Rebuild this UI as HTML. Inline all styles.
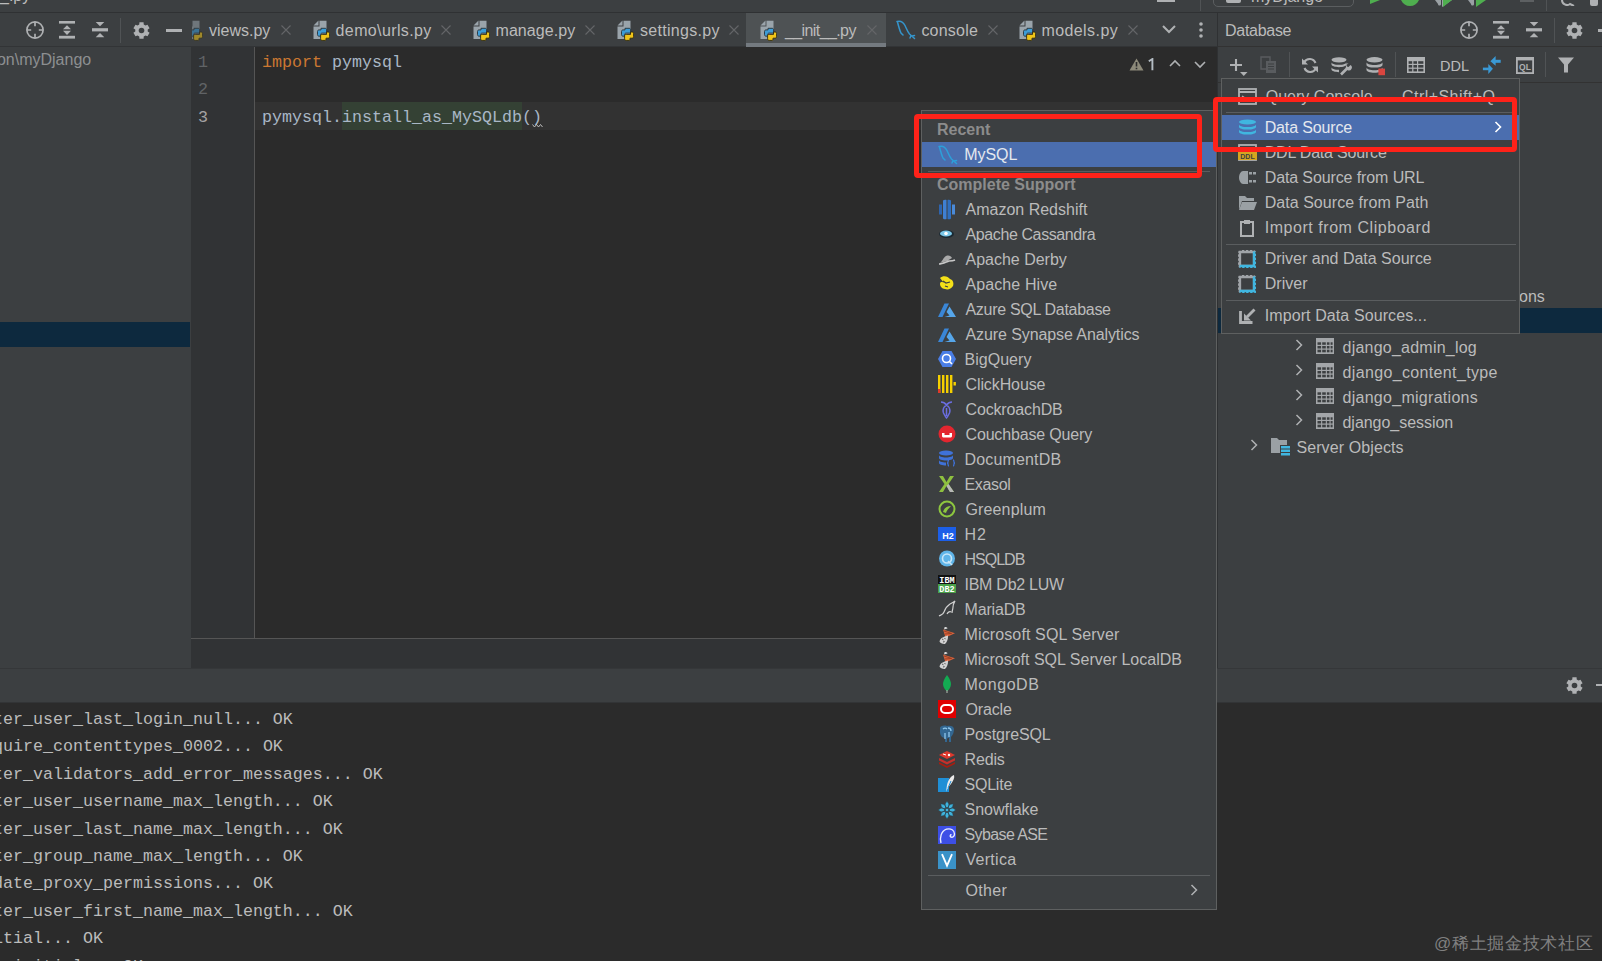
<!DOCTYPE html>
<html><head><meta charset="utf-8">
<style>
*{margin:0;padding:0;box-sizing:border-box}
html,body{width:1602px;height:961px;overflow:hidden;background:#2b2b2b;font-family:"Liberation Sans",sans-serif;font-size:16px;color:#bbbbbb;position:relative}
.a{position:absolute;display:block}
.t{position:absolute;white-space:nowrap;line-height:20px;height:20px}
.mono{font-family:"Liberation Mono",monospace;font-size:16.67px}
</style></head><body>
<div class="a" style="left:0px;top:0px;width:1602px;height:12px;background:#3c3f41;"></div>
<div class="a" style="left:0px;top:12px;width:1602px;height:1px;background:#2f3133;"></div>
<div class="a" style="left:0px;top:13px;width:1602px;height:34px;background:#3c3f41;"></div>
<div class="a" style="left:0px;top:47px;width:191px;height:621px;background:#3c3f41;"></div>
<div class="a" style="left:0px;top:322px;width:190px;height:25px;background:#0d293e;"></div>
<div class="a" style="left:191px;top:47px;width:63px;height:591px;background:#313335;"></div>
<div class="a" style="left:254px;top:47px;width:1px;height:591px;background:#555555;"></div>
<div class="a" style="left:255px;top:47px;width:962px;height:591px;background:#2b2b2b;"></div>
<div class="a" style="left:255px;top:102px;width:962px;height:28px;background:#323232;"></div>
<div class="a" style="left:342px;top:102px;width:180px;height:28px;background:#344134;"></div>
<div class="a" style="left:191px;top:638px;width:1026px;height:1px;background:#555555;"></div>
<div class="a" style="left:191px;top:639px;width:1026px;height:29px;background:#313335;"></div>
<div class="a" style="left:0px;top:668px;width:1602px;height:35px;background:#3c3f41;"></div>
<div class="a" style="left:0px;top:668px;width:1602px;height:1px;background:#353739;"></div>
<div class="a" style="left:0px;top:702px;width:1602px;height:1px;background:#323436;"></div>
<div class="a" style="left:0px;top:703px;width:1602px;height:258px;background:#2b2b2b;"></div>
<div class="a" style="left:1217px;top:13px;width:1px;height:655px;background:#2f3133;"></div>
<div class="a" style="left:1218px;top:13px;width:384px;height:655px;background:#3c3f41;"></div>
<div class="a" style="left:1218px;top:46px;width:384px;height:1px;background:#323232;"></div>
<div class="a" style="left:1218px;top:82px;width:384px;height:1px;background:#323232;"></div>
<div class="a" style="left:1218px;top:308px;width:384px;height:25px;background:#0d293e;"></div>
<div class="t" style="left:0px;top:-14px;color:#bbbbbb;font-size:16px;font-weight:normal;">_.py</div>
<div class="a" style="left:1213px;top:-8px;width:141px;height:15px;background:transparent;border:1px solid #5b5e60;border-radius:5px"></div>
<div class="a" style="left:1157px;top:0px;width:18px;height:2px;background:#afb1b3;"></div>
<div class="a" style="left:1200px;top:0px;width:1px;height:11px;background:#505355;"></div>
<div class="a" style="left:1226px;top:0px;width:15px;height:3px;background:#afb1b3;border-radius:0 0 2px 2px"></div>
<div class="t" style="left:1251px;top:-13px;color:#bbbbbb;font-size:16px;font-weight:normal;">myDjango</div>
<svg class="a" style="left:1370px;top:0px;" width="10" height="4" viewBox="0 0 10 4"><path d="M0 0h10L0 4z" fill="#4fae4f"/></svg>
<svg class="a" style="left:1401px;top:0px;" width="18" height="6" viewBox="0 0 18 6"><path d="M0 0h18c-2 4-5 6-9 6S2 4 0 0z" fill="#4fae4f"/></svg>
<svg class="a" style="left:1435px;top:0px;" width="17" height="7" viewBox="0 0 17 7"><path d="M0 0h6v4c0 2-3 2-3 0zM7 0h10L7 7z" fill="#9aa0a4"/><path d="M8 0h9L8 7z" fill="#4fae4f"/></svg>
<svg class="a" style="left:1468px;top:0px;" width="18" height="7" viewBox="0 0 18 7"><path d="M0 0h6v4c0 2-3 2-3 0z" fill="#9aa0a4"/><path d="M8 0h10L8 7z" fill="#4fae4f"/></svg>
<div class="a" style="left:1520px;top:0px;width:14px;height:2px;background:#5d6062;"></div>
<div class="a" style="left:1546px;top:0px;width:1px;height:11px;background:#505355;"></div>
<svg class="a" style="left:1560px;top:0px;" width="16" height="6" viewBox="0 0 16 6"><path d="M2 0a5 5 0 0 0 8 4l4 2" stroke="#afb1b3" stroke-width="2" fill="none"/></svg>
<div class="a" style="left:1590px;top:0px;width:8px;height:6px;background:#afb1b3;border-radius:0 0 2px 2px"></div>
<svg class="a" style="left:26px;top:21px;" width="18" height="18" viewBox="0 0 18 18"><circle cx="9" cy="9" r="8.1" fill="none" stroke="#afb1b3" stroke-width="1.7"/><path d="M9 1v4.2M9 12.8V17M1 9h4.2M12.8 9H17" stroke="#afb1b3" stroke-width="1.7"/></svg>
<svg class="a" style="left:59px;top:21px;" width="16" height="18" viewBox="0 0 16 18"><rect x="0" y="0" width="16" height="2.6" fill="#afb1b3"/><rect x="0" y="14.8" width="16" height="2.8" fill="#afb1b3"/><path d="M4 8.3L8 4.2L12 8.3zM4 9.8L8 13.9L12 9.8z" fill="#afb1b3"/></svg>
<svg class="a" style="left:92px;top:22px;" width="16" height="16" viewBox="0 0 16 16"><rect x="0" y="6.2" width="16" height="3.2" fill="#afb1b3"/><path d="M3.7 0H12.3L8 4.3zM3.7 15.3H12.3L8 11z" fill="#afb1b3"/></svg>
<div class="a" style="left:120px;top:18px;width:1px;height:25px;background:#505355;"></div>
<div class="a" style="left:0px;top:46px;width:1217px;height:1px;background:#323436;"></div>
<svg class="a" style="left:132.5px;top:21.5px;" width="17" height="17" viewBox="0 0 17 17"><path d="M6.27 2.61 L6.42 0.36 L10.58 0.36 L10.73 2.61 L12.48 3.62 L14.51 2.63 L16.59 6.23 L14.72 7.49 L14.72 9.51 L16.59 10.77 L14.51 14.37 L12.48 13.38 L10.73 14.39 L10.58 16.64 L6.42 16.64 L6.27 14.39 L4.52 13.38 L2.49 14.37 L0.41 10.77 L2.28 9.51 L2.28 7.49 L0.41 6.23 L2.49 2.63 L4.52 3.62Z" fill="#afb1b3"/><circle cx="8.5" cy="8.5" r="2.8" fill="#3c3f41"/></svg>
<div class="a" style="left:166px;top:29px;width:16px;height:2.5px;background:#afb1b3;"></div>
<div class="a" style="left:746px;top:13px;width:140px;height:34px;background:#4e5254;"></div>
<div class="a" style="left:746px;top:43px;width:140px;height:4px;background:#747a80;"></div>
<div class="a" style="left:192px;top:19px;width:11px;height:22px;overflow:hidden;opacity:.55"><svg class="a" style="left:-6px;top:1px" width="17" height="21" viewBox="0 0 17 21"><path d="M6.5 0.8H13.5V19H0.5V6.5H6.5Z" fill="#9aa4ab"/><path d="M0.5 5.5L5.5 0.5V5.5Z" fill="#9aa4ab"/><path d="M8 8.3h4c1 0 1.6.6 1.6 1.6v3.2H9.2c-1 0-1.6.6-1.6 1.6V16.2H6.1c-1 0-1.6-.6-1.6-1.6v-3.1c0-1 .6-1.6 1.6-1.6h1.9z" fill="#3d9cd6" stroke="#26323a" stroke-width=".9"/><path d="M15 12c1 0 1.6.6 1.6 1.6v3c0 1-.6 1.6-1.6 1.6h-2v1.2c0 .6-.5 1-1 1H9.2c-1 0-1.6-.6-1.6-1.6v-2.8c0-1 .6-1.6 1.6-1.6h4.3V12z" fill="#f0c419" stroke="#2e2a10" stroke-width=".9"/></svg></div>
<div class="t" style="left:209px;top:21px;color:#bbbbbb;font-size:16px;font-weight:normal;letter-spacing:0.000px;">views.py</div>
<svg class="a" style="left:281px;top:25px;" width="10" height="10" viewBox="0 0 10 10"><path d="M0.5 0.5l9 9M9.5 0.5l-9 9" stroke="#646668" stroke-width="1.1"/></svg>
<div class="t" style="left:335.6px;top:21px;color:#bbbbbb;font-size:16px;font-weight:normal;letter-spacing:0.373px;">demo\urls.py</div>
<svg class="a" style="left:441px;top:25px;" width="10" height="10" viewBox="0 0 10 10"><path d="M0.5 0.5l9 9M9.5 0.5l-9 9" stroke="#646668" stroke-width="1.1"/></svg>
<div class="t" style="left:495.5px;top:21px;color:#bbbbbb;font-size:16px;font-weight:normal;letter-spacing:0.062px;">manage.py</div>
<svg class="a" style="left:585px;top:25px;" width="10" height="10" viewBox="0 0 10 10"><path d="M0.5 0.5l9 9M9.5 0.5l-9 9" stroke="#646668" stroke-width="1.1"/></svg>
<div class="t" style="left:640px;top:21px;color:#bbbbbb;font-size:16px;font-weight:normal;letter-spacing:0.300px;">settings.py</div>
<svg class="a" style="left:729px;top:25px;" width="10" height="10" viewBox="0 0 10 10"><path d="M0.5 0.5l9 9M9.5 0.5l-9 9" stroke="#646668" stroke-width="1.1"/></svg>
<div class="t" style="left:785px;top:21px;color:#bbbbbb;font-size:16px;font-weight:normal;letter-spacing:-0.600px;">__init__.py</div>
<svg class="a" style="left:867px;top:25px;" width="10" height="10" viewBox="0 0 10 10"><path d="M0.5 0.5l9 9M9.5 0.5l-9 9" stroke="#646668" stroke-width="1.1"/></svg>
<div class="t" style="left:921.4px;top:21px;color:#bbbbbb;font-size:16px;font-weight:normal;letter-spacing:0.217px;">console</div>
<svg class="a" style="left:988px;top:25px;" width="10" height="10" viewBox="0 0 10 10"><path d="M0.5 0.5l9 9M9.5 0.5l-9 9" stroke="#646668" stroke-width="1.1"/></svg>
<div class="t" style="left:1041.4px;top:21px;color:#bbbbbb;font-size:16px;font-weight:normal;letter-spacing:0.425px;">models.py</div>
<svg class="a" style="left:1128px;top:25px;" width="10" height="10" viewBox="0 0 10 10"><path d="M0.5 0.5l9 9M9.5 0.5l-9 9" stroke="#646668" stroke-width="1.1"/></svg>
<svg class="a" style="left:313px;top:20px;" width="17" height="21" viewBox="0 0 17 21"><path d="M6.5 0.8H13.5V19H0.5V6.5H6.5Z" fill="#9aa4ab"/><path d="M0.5 5.5L5.5 0.5V5.5Z" fill="#9aa4ab"/><path d="M8 8.3h4c1 0 1.6.6 1.6 1.6v3.2H9.2c-1 0-1.6.6-1.6 1.6V16.2H6.1c-1 0-1.6-.6-1.6-1.6v-3.1c0-1 .6-1.6 1.6-1.6h1.9z" fill="#3d9cd6" stroke="#26323a" stroke-width=".9"/><path d="M15 12c1 0 1.6.6 1.6 1.6v3c0 1-.6 1.6-1.6 1.6h-2v1.2c0 .6-.5 1-1 1H9.2c-1 0-1.6-.6-1.6-1.6v-2.8c0-1 .6-1.6 1.6-1.6h4.3V12z" fill="#f0c419" stroke="#2e2a10" stroke-width=".9"/></svg>
<svg class="a" style="left:473px;top:20px;" width="17" height="21" viewBox="0 0 17 21"><path d="M6.5 0.8H13.5V19H0.5V6.5H6.5Z" fill="#9aa4ab"/><path d="M0.5 5.5L5.5 0.5V5.5Z" fill="#9aa4ab"/><path d="M8 8.3h4c1 0 1.6.6 1.6 1.6v3.2H9.2c-1 0-1.6.6-1.6 1.6V16.2H6.1c-1 0-1.6-.6-1.6-1.6v-3.1c0-1 .6-1.6 1.6-1.6h1.9z" fill="#3d9cd6" stroke="#26323a" stroke-width=".9"/><path d="M15 12c1 0 1.6.6 1.6 1.6v3c0 1-.6 1.6-1.6 1.6h-2v1.2c0 .6-.5 1-1 1H9.2c-1 0-1.6-.6-1.6-1.6v-2.8c0-1 .6-1.6 1.6-1.6h4.3V12z" fill="#f0c419" stroke="#2e2a10" stroke-width=".9"/></svg>
<svg class="a" style="left:617px;top:20px;" width="17" height="21" viewBox="0 0 17 21"><path d="M6.5 0.8H13.5V19H0.5V6.5H6.5Z" fill="#9aa4ab"/><path d="M0.5 5.5L5.5 0.5V5.5Z" fill="#9aa4ab"/><path d="M8 8.3h4c1 0 1.6.6 1.6 1.6v3.2H9.2c-1 0-1.6.6-1.6 1.6V16.2H6.1c-1 0-1.6-.6-1.6-1.6v-3.1c0-1 .6-1.6 1.6-1.6h1.9z" fill="#3d9cd6" stroke="#26323a" stroke-width=".9"/><path d="M15 12c1 0 1.6.6 1.6 1.6v3c0 1-.6 1.6-1.6 1.6h-2v1.2c0 .6-.5 1-1 1H9.2c-1 0-1.6-.6-1.6-1.6v-2.8c0-1 .6-1.6 1.6-1.6h4.3V12z" fill="#f0c419" stroke="#2e2a10" stroke-width=".9"/></svg>
<svg class="a" style="left:760px;top:20px;" width="17" height="21" viewBox="0 0 17 21"><path d="M6.5 0.8H13.5V19H0.5V6.5H6.5Z" fill="#9aa4ab"/><path d="M0.5 5.5L5.5 0.5V5.5Z" fill="#9aa4ab"/><path d="M8 8.3h4c1 0 1.6.6 1.6 1.6v3.2H9.2c-1 0-1.6.6-1.6 1.6V16.2H6.1c-1 0-1.6-.6-1.6-1.6v-3.1c0-1 .6-1.6 1.6-1.6h1.9z" fill="#3d9cd6" stroke="#26323a" stroke-width=".9"/><path d="M15 12c1 0 1.6.6 1.6 1.6v3c0 1-.6 1.6-1.6 1.6h-2v1.2c0 .6-.5 1-1 1H9.2c-1 0-1.6-.6-1.6-1.6v-2.8c0-1 .6-1.6 1.6-1.6h4.3V12z" fill="#f0c419" stroke="#2e2a10" stroke-width=".9"/></svg>
<svg class="a" style="left:1019px;top:20px;" width="17" height="21" viewBox="0 0 17 21"><path d="M6.5 0.8H13.5V19H0.5V6.5H6.5Z" fill="#9aa4ab"/><path d="M0.5 5.5L5.5 0.5V5.5Z" fill="#9aa4ab"/><path d="M8 8.3h4c1 0 1.6.6 1.6 1.6v3.2H9.2c-1 0-1.6.6-1.6 1.6V16.2H6.1c-1 0-1.6-.6-1.6-1.6v-3.1c0-1 .6-1.6 1.6-1.6h1.9z" fill="#3d9cd6" stroke="#26323a" stroke-width=".9"/><path d="M15 12c1 0 1.6.6 1.6 1.6v3c0 1-.6 1.6-1.6 1.6h-2v1.2c0 .6-.5 1-1 1H9.2c-1 0-1.6-.6-1.6-1.6v-2.8c0-1 .6-1.6 1.6-1.6h4.3V12z" fill="#f0c419" stroke="#2e2a10" stroke-width=".9"/></svg>
<svg class="a" style="left:896px;top:20px;" width="20" height="20" viewBox="0 0 20 20"><path d="M1 1.5C4.5 0.5 7.5 2.5 9 5.5S11.5 12 13.5 14L18.5 18.5M1.5 2C2.5 6 3.5 10 5 13L7 15M15 15.5l-1 2.5M16 16l2.5-.5" fill="none" stroke="#3595cc" stroke-width="1.5" stroke-linecap="round"/></svg>
<svg class="a" style="left:1162px;top:25px;" width="14" height="9" viewBox="0 0 14 9"><path d="M1 1l6 6 6-6" fill="none" stroke="#afb1b3" stroke-width="2"/></svg>
<svg class="a" style="left:1198px;top:22px;" width="6" height="16" viewBox="0 0 6 16"><circle cx="3" cy="2" r="1.8" fill="#afb1b3"/><circle cx="3" cy="8" r="1.8" fill="#afb1b3"/><circle cx="3" cy="14" r="1.8" fill="#afb1b3"/></svg>
<div class="t" style="left:-12px;top:50px;color:#8d8f91;font-size:16px;font-weight:normal;">hon\myDjango</div>
<div class="t mono" style="left:198px;top:53px;color:#606366;">1</div>
<div class="t mono" style="left:198px;top:80px;color:#606366;">2</div>
<div class="t mono" style="left:198px;top:108px;color:#a4a3a3;">3</div>
<div class="t mono" style="left:262px;top:53px;color:#a9b7c6;"><span style="color:#cc7832">import</span> pymysql</div>
<div class="t mono" style="left:262px;top:108px;color:#a9b7c6;">pymysql.install_as_MySQLdb()</div>
<svg class="a" style="left:532px;top:123px;" width="11" height="5" viewBox="0 0 11 5"><path d="M0.5 1.5l2 2.5 2-2.5 2 2.5 2-2.5 2 2.5" fill="none" stroke="#c8c8c8" stroke-width="0.9"/></svg>
<svg class="a" style="left:1129px;top:58px;" width="15" height="13" viewBox="0 0 15 13"><path d="M7.5 0.5L14.5 12.5H0.5z" fill="#8d8a7a"/><path d="M7.5 4v4.5M7.5 9.8v1.4" stroke="#2b2b2b" stroke-width="1.6"/></svg>
<svg class="a" style="left:1148px;top:58px;" width="7" height="13" viewBox="0 0 7 13"><path d="M0.8 3.2L4.4 1V12.2" fill="none" stroke="#b4bcc4" stroke-width="1.9"/></svg>
<svg class="a" style="left:1169px;top:59px;" width="12" height="8" viewBox="0 0 12 8"><path d="M1 7l5-5 5 5" fill="none" stroke="#afb1b3" stroke-width="1.6"/></svg>
<svg class="a" style="left:1194px;top:61px;" width="12" height="8" viewBox="0 0 12 8"><path d="M1 1l5 5 5-5" fill="none" stroke="#afb1b3" stroke-width="1.6"/></svg>
<div class="t mono" style="left:-7px;top:710px;color:#bbbbbb;">ter_user_last_login_null... OK</div>
<div class="t mono" style="left:-7px;top:737px;color:#bbbbbb;">quire_contenttypes_0002... OK</div>
<div class="t mono" style="left:-7px;top:765px;color:#bbbbbb;">ter_validators_add_error_messages... OK</div>
<div class="t mono" style="left:-7px;top:792px;color:#bbbbbb;">ter_user_username_max_length... OK</div>
<div class="t mono" style="left:-7px;top:820px;color:#bbbbbb;">ter_user_last_name_max_length... OK</div>
<div class="t mono" style="left:-7px;top:847px;color:#bbbbbb;">ter_group_name_max_length... OK</div>
<div class="t mono" style="left:-7px;top:874px;color:#bbbbbb;">date_proxy_permissions... OK</div>
<div class="t mono" style="left:-7px;top:902px;color:#bbbbbb;">ter_user_first_name_max_length... OK</div>
<div class="t mono" style="left:-7px;top:929px;color:#bbbbbb;">itial... OK</div>
<div class="t mono" style="left:-7px;top:957px;color:#bbbbbb;">1_initial... OK</div>
<svg class="a" style="left:1566px;top:677px;" width="17" height="17" viewBox="0 0 17 17"><path d="M6.27 2.61 L6.42 0.36 L10.58 0.36 L10.73 2.61 L12.48 3.62 L14.51 2.63 L16.59 6.23 L14.72 7.49 L14.72 9.51 L16.59 10.77 L14.51 14.37 L12.48 13.38 L10.73 14.39 L10.58 16.64 L6.42 16.64 L6.27 14.39 L4.52 13.38 L2.49 14.37 L0.41 10.77 L2.28 9.51 L2.28 7.49 L0.41 6.23 L2.49 2.63 L4.52 3.62Z" fill="#afb1b3"/><circle cx="8.5" cy="8.5" r="2.8" fill="#3c3f41"/></svg>
<div class="a" style="left:1596px;top:684px;width:6px;height:2px;background:#afb1b3;"></div>
<div class="t" style="left:1434px;top:934px;color:#808080;font-size:17px;font-weight:normal;letter-spacing:0.7px;">@稀土掘金技术社区</div>
<div class="t" style="left:1225px;top:21px;color:#bbbbbb;font-size:16px;font-weight:normal;letter-spacing:-0.286px;">Database</div>
<svg class="a" style="left:1460px;top:21px;" width="18" height="18" viewBox="0 0 18 18"><circle cx="9" cy="9" r="8.1" fill="none" stroke="#afb1b3" stroke-width="1.7"/><path d="M9 1v4.2M9 12.8V17M1 9h4.2M12.8 9H17" stroke="#afb1b3" stroke-width="1.7"/></svg>
<svg class="a" style="left:1493px;top:21px;" width="16" height="18" viewBox="0 0 16 18"><rect x="0" y="0" width="16" height="2.6" fill="#afb1b3"/><rect x="0" y="14.8" width="16" height="2.8" fill="#afb1b3"/><path d="M4 8.3L8 4.2L12 8.3zM4 9.8L8 13.9L12 9.8z" fill="#afb1b3"/></svg>
<svg class="a" style="left:1526px;top:22px;" width="16" height="16" viewBox="0 0 16 16"><rect x="0" y="6.2" width="16" height="3.2" fill="#afb1b3"/><path d="M3.7 0H12.3L8 4.3zM3.7 15.3H12.3L8 11z" fill="#afb1b3"/></svg>
<div class="a" style="left:1554px;top:18px;width:1px;height:25px;background:#505355;"></div>
<svg class="a" style="left:1566.3px;top:21.6px;" width="17" height="17" viewBox="0 0 17 17"><path d="M6.27 2.61 L6.42 0.36 L10.58 0.36 L10.73 2.61 L12.48 3.62 L14.51 2.63 L16.59 6.23 L14.72 7.49 L14.72 9.51 L16.59 10.77 L14.51 14.37 L12.48 13.38 L10.73 14.39 L10.58 16.64 L6.42 16.64 L6.27 14.39 L4.52 13.38 L2.49 14.37 L0.41 10.77 L2.28 9.51 L2.28 7.49 L0.41 6.23 L2.49 2.63 L4.52 3.62Z" fill="#afb1b3"/><circle cx="8.5" cy="8.5" r="2.8" fill="#3c3f41"/></svg>
<div class="a" style="left:1598px;top:29px;width:4px;height:2.5px;background:#afb1b3;"></div>
<svg class="a" style="left:1229px;top:58px;" width="19" height="19" viewBox="0 0 19 19"><path d="M7 1v12M1 7h12" stroke="#afb1b3" stroke-width="2.1"/><path d="M11 14h7.5l-3.75 4z" fill="#afb1b3"/></svg>
<svg class="a" style="left:1260px;top:56px;" width="17" height="18" viewBox="0 0 17 18"><path d="M1 1h9v12H1z" fill="none" stroke="#595c5f" stroke-width="1.4"/><path d="M6 5h10v12H6z" fill="#595c5f"/><path d="M8 8h6M8 10.5h6M8 13h6" stroke="#3c3f41" stroke-width="1.1"/></svg>
<div class="a" style="left:1289px;top:52px;width:1px;height:25px;background:#505355;"></div>
<svg class="a" style="left:1301px;top:57px;" width="18" height="17" viewBox="0 0 18 17"><path d="M14.5 6A6.3 6.3 0 0 0 3.2 5.2M3.5 11A6.3 6.3 0 0 0 14.8 11.8" fill="none" stroke="#afb1b3" stroke-width="2.1"/><path d="M1 1.5v6h6zM17 15.5v-6h-6z" fill="#afb1b3"/></svg>
<svg class="a" style="left:1331px;top:57px;" width="21" height="19" viewBox="0 0 21 19"><ellipse cx="8" cy="2.8" rx="7.5" ry="2.6" fill="#afb1b3"/><path d="M0.5 5.2c0 1.5 3.4 2.6 7.5 2.6s7.5-1.1 7.5-2.6v2.4c0 1.5-3.4 2.6-7.5 2.6S.5 9.1.5 7.6zM.5 10.2c0 1.5 3.4 2.6 7.5 2.6v2.4c-4.1 0-7.5-1.1-7.5-2.6z" fill="#afb1b3"/><path d="M10 17.5l6.5-6.5" stroke="#afb1b3" stroke-width="2.6"/><path d="M15 9.5a3 3 0 1 0 4.5-1.5l-2 2-1.6-.4-.4-1.6 2-2a3 3 0 0 0-2.5 3.5z" fill="#afb1b3"/></svg>
<svg class="a" style="left:1366px;top:57px;" width="20" height="19" viewBox="0 0 20 19"><ellipse cx="8.5" cy="2.8" rx="8" ry="2.7" fill="#afb1b3"/><path d="M.5 5.3c0 1.5 3.6 2.7 8 2.7s8-1.2 8-2.7v2.6c0 1.5-3.6 2.7-8 2.7s-8-1.2-8-2.7zM.5 10.5c0 1.5 3.6 2.7 8 2.7s8-1.2 8-2.7v2.6c0 1.5-3.6 2.7-8 2.7s-8-1.2-8-2.7z" fill="#afb1b3"/><rect x="12.4" y="11.6" width="6.6" height="6.6" fill="#d9453f"/></svg>
<div class="a" style="left:1395px;top:52px;width:1px;height:25px;background:#505355;"></div>
<svg class="a" style="left:1407px;top:57px;" width="18" height="16" viewBox="0 0 18 16"><rect x="0" y="0" width="18" height="16" fill="#afb1b3"/><g fill="#3c3f41"><rect x="1.6" y="4.2" width="3.6" height="2.6"/><rect x="6.4" y="4.2" width="3.6" height="2.6"/><rect x="11.2" y="4.2" width="5.2" height="2.6"/><rect x="1.6" y="8" width="3.6" height="2.6"/><rect x="6.4" y="8" width="3.6" height="2.6"/><rect x="11.2" y="8" width="5.2" height="2.6"/><rect x="1.6" y="11.8" width="3.6" height="2.6"/><rect x="6.4" y="11.8" width="3.6" height="2.6"/><rect x="11.2" y="11.8" width="5.2" height="2.6"/></g></svg>
<div class="t" style="left:1440px;top:56px;color:#bbbbbb;font-size:14.5px;font-weight:normal;">DDL</div>
<svg class="a" style="left:1482px;top:55px;" width="20" height="20" viewBox="0 0 20 20"><path d="M8.4 6.3L13.6 1.1V10.8z" fill="#3a9ad6"/><rect x="13" y="4.8" width="5.7" height="3" fill="#3a9ad6"/><path d="M10.9 13.7L6.3 8.9V18.9z" fill="#3a9ad6"/><rect x="0.9" y="12.6" width="6" height="2.6" fill="#3a9ad6"/></svg>
<svg class="a" style="left:1516px;top:57px;" width="18" height="17" viewBox="0 0 18 17"><rect x="0.9" y="0.9" width="16.2" height="15.2" fill="none" stroke="#afb1b3" stroke-width="1.8"/><rect x="0" y="0" width="18" height="3.4" fill="#afb1b3"/><text x="9" y="13.4" font-family="Liberation Sans" font-size="8.5" font-weight="bold" fill="#afb1b3" text-anchor="middle">QL</text></svg>
<div class="a" style="left:1545px;top:52px;width:1px;height:25px;background:#505355;"></div>
<svg class="a" style="left:1558px;top:57px;" width="16" height="16" viewBox="0 0 16 16"><path d="M0 0.5h16L10 7.5v8h-4v-8z" fill="#afb1b3"/></svg>
<div class="t" style="left:1519px;top:287px;color:#bbbbbb;font-size:16px;font-weight:normal;">ons</div>
<svg class="a" style="left:1295px;top:339px;" width="8" height="12" viewBox="0 0 8 12"><path d="M1.5 1l5 5-5 5" fill="none" stroke="#afb1b3" stroke-width="1.5"/></svg>
<svg class="a" style="left:1316px;top:338px;" width="18" height="16" viewBox="0 0 18 16"><rect x="0" y="0" width="18" height="16" fill="#a3a6a9"/><g fill="#3c3f41"><rect x="1.5" y="4.3" width="3.6" height="2.5"/><rect x="6.2" y="4.3" width="3.6" height="2.5"/><rect x="10.9" y="4.3" width="2.6" height="2.5"/><rect x="14.6" y="4.3" width="2" height="2.5"/><rect x="1.5" y="8" width="3.6" height="2.5"/><rect x="6.2" y="8" width="3.6" height="2.5"/><rect x="10.9" y="8" width="2.6" height="2.5"/><rect x="14.6" y="8" width="2" height="2.5"/><rect x="1.5" y="11.7" width="3.6" height="2.6"/><rect x="6.2" y="11.7" width="3.6" height="2.6"/><rect x="10.9" y="11.7" width="2.6" height="2.6"/><rect x="14.6" y="11.7" width="2" height="2.6"/></g></svg>
<div class="t" style="left:1342.5px;top:338px;color:#bbbbbb;font-size:16px;font-weight:normal;letter-spacing:0.233px;">django_admin_log</div>
<svg class="a" style="left:1295px;top:364px;" width="8" height="12" viewBox="0 0 8 12"><path d="M1.5 1l5 5-5 5" fill="none" stroke="#afb1b3" stroke-width="1.5"/></svg>
<svg class="a" style="left:1316px;top:363px;" width="18" height="16" viewBox="0 0 18 16"><rect x="0" y="0" width="18" height="16" fill="#a3a6a9"/><g fill="#3c3f41"><rect x="1.5" y="4.3" width="3.6" height="2.5"/><rect x="6.2" y="4.3" width="3.6" height="2.5"/><rect x="10.9" y="4.3" width="2.6" height="2.5"/><rect x="14.6" y="4.3" width="2" height="2.5"/><rect x="1.5" y="8" width="3.6" height="2.5"/><rect x="6.2" y="8" width="3.6" height="2.5"/><rect x="10.9" y="8" width="2.6" height="2.5"/><rect x="14.6" y="8" width="2" height="2.5"/><rect x="1.5" y="11.7" width="3.6" height="2.6"/><rect x="6.2" y="11.7" width="3.6" height="2.6"/><rect x="10.9" y="11.7" width="2.6" height="2.6"/><rect x="14.6" y="11.7" width="2" height="2.6"/></g></svg>
<div class="t" style="left:1342.5px;top:363px;color:#bbbbbb;font-size:16px;font-weight:normal;letter-spacing:0.356px;">django_content_type</div>
<svg class="a" style="left:1295px;top:389px;" width="8" height="12" viewBox="0 0 8 12"><path d="M1.5 1l5 5-5 5" fill="none" stroke="#afb1b3" stroke-width="1.5"/></svg>
<svg class="a" style="left:1316px;top:388px;" width="18" height="16" viewBox="0 0 18 16"><rect x="0" y="0" width="18" height="16" fill="#a3a6a9"/><g fill="#3c3f41"><rect x="1.5" y="4.3" width="3.6" height="2.5"/><rect x="6.2" y="4.3" width="3.6" height="2.5"/><rect x="10.9" y="4.3" width="2.6" height="2.5"/><rect x="14.6" y="4.3" width="2" height="2.5"/><rect x="1.5" y="8" width="3.6" height="2.5"/><rect x="6.2" y="8" width="3.6" height="2.5"/><rect x="10.9" y="8" width="2.6" height="2.5"/><rect x="14.6" y="8" width="2" height="2.5"/><rect x="1.5" y="11.7" width="3.6" height="2.6"/><rect x="6.2" y="11.7" width="3.6" height="2.6"/><rect x="10.9" y="11.7" width="2.6" height="2.6"/><rect x="14.6" y="11.7" width="2" height="2.6"/></g></svg>
<div class="t" style="left:1342.5px;top:388px;color:#bbbbbb;font-size:16px;font-weight:normal;letter-spacing:0.281px;">django_migrations</div>
<svg class="a" style="left:1295px;top:414px;" width="8" height="12" viewBox="0 0 8 12"><path d="M1.5 1l5 5-5 5" fill="none" stroke="#afb1b3" stroke-width="1.5"/></svg>
<svg class="a" style="left:1316px;top:413px;" width="18" height="16" viewBox="0 0 18 16"><rect x="0" y="0" width="18" height="16" fill="#a3a6a9"/><g fill="#3c3f41"><rect x="1.5" y="4.3" width="3.6" height="2.5"/><rect x="6.2" y="4.3" width="3.6" height="2.5"/><rect x="10.9" y="4.3" width="2.6" height="2.5"/><rect x="14.6" y="4.3" width="2" height="2.5"/><rect x="1.5" y="8" width="3.6" height="2.5"/><rect x="6.2" y="8" width="3.6" height="2.5"/><rect x="10.9" y="8" width="2.6" height="2.5"/><rect x="14.6" y="8" width="2" height="2.5"/><rect x="1.5" y="11.7" width="3.6" height="2.6"/><rect x="6.2" y="11.7" width="3.6" height="2.6"/><rect x="10.9" y="11.7" width="2.6" height="2.6"/><rect x="14.6" y="11.7" width="2" height="2.6"/></g></svg>
<div class="t" style="left:1342.5px;top:413px;color:#bbbbbb;font-size:16px;font-weight:normal;letter-spacing:-0.038px;">django_session</div>
<svg class="a" style="left:1250px;top:439px;" width="8" height="12" viewBox="0 0 8 12"><path d="M1.5 1l5 5-5 5" fill="none" stroke="#afb1b3" stroke-width="1.5"/></svg>
<svg class="a" style="left:1271px;top:437px;" width="20" height="19" viewBox="0 0 20 19"><path d="M0 1h6l2 2h8v13H0z" fill="#9aa0a4"/><rect x="9" y="8" width="10" height="11" fill="#3c3f41"/><rect x="10" y="9" width="9" height="2.5" fill="#40b6e0"/><rect x="10" y="12.5" width="9" height="2.5" fill="#40b6e0"/><rect x="10" y="16" width="9" height="2.5" fill="#40b6e0"/></svg>
<div class="t" style="left:1296.4px;top:438px;color:#bbbbbb;font-size:16px;font-weight:normal;letter-spacing:0.108px;">Server Objects</div>
<div class="a" style="left:921px;top:110px;width:296px;height:800px;background:#3c3f41;border:1px solid #5e6060"></div>
<div class="t" style="left:937px;top:120px;color:#8c8c8c;font-size:16px;font-weight:bold;">Recent</div>
<div class="a" style="left:922px;top:142px;width:294px;height:25px;background:#4b6eaf;"></div>
<svg class="a" style="left:938px;top:145px;" width="20" height="20" viewBox="0 0 20 20"><path d="M1 1.5C4.5 0.5 7.5 2.5 9 5.5S11.5 12 13.5 14L18.5 18.5M1.5 2C2.5 6 3.5 10 5 13L7 15M15 15.5l-1 2.5M16 16l2.5-.5" fill="none" stroke="#2d9fd9" stroke-width="1.5" stroke-linecap="round"/></svg>
<div class="t" style="left:964.2px;top:145px;color:#e4e8ee;font-size:16px;font-weight:normal;letter-spacing:-0.025px;">MySQL</div>
<div class="a" style="left:928px;top:171px;width:282px;height:1px;background:#5a5d5f;"></div>
<div class="t" style="left:937px;top:175px;color:#8c8c8c;font-size:16px;font-weight:bold;">Complete Support</div>
<svg class="a" style="left:938px;top:199px;" width="18" height="21" viewBox="0 0 18 21"><path d="M1 5.5h3v10H1z" fill="#2e64ad"/><path d="M5 1.5c1-1 2.5-1 3.5-.5v19c-1 .5-2.5.5-3.5-.5z" fill="#3f80d3"/><path d="M9.5 1c1-.5 2.5-.5 3.5.5v18c-1 1-2.5 1-3.5.5z" fill="#2f6fc0"/><path d="M14 5.5h3v10h-3z" fill="#4a8ad8"/></svg>
<div class="t" style="left:965.5px;top:200px;color:#bbbbbb;font-size:16px;font-weight:normal;letter-spacing:0.000px;">Amazon Redshift</div>
<svg class="a" style="left:938px;top:225px;" width="18" height="19" viewBox="0 0 18 19"><ellipse cx="8.5" cy="9" rx="7.5" ry="4" fill="#1b2a33"/><ellipse cx="8" cy="8.5" rx="6" ry="3" fill="#7ac6e8"/><circle cx="8" cy="8.5" r="1.8" fill="#fff"/></svg>
<div class="t" style="left:965.5px;top:225px;color:#bbbbbb;font-size:16px;font-weight:normal;letter-spacing:-0.393px;">Apache Cassandra</div>
<svg class="a" style="left:938px;top:250px;" width="18" height="19" viewBox="0 0 18 19"><path d="M2 13c2-1 3-5 6-7 3-1 5 0 6 2-1 1-3 1-4 3-2 0-5 1-8 2z" fill="#a9a9a9"/><path d="M1 14c3 0 7-2 10-3 2 0 4 0 6-1" stroke="#c8c8c8" stroke-width="1.4" fill="none"/></svg>
<div class="t" style="left:965.5px;top:250px;color:#bbbbbb;font-size:16px;font-weight:normal;letter-spacing:-0.009px;">Apache Derby</div>
<svg class="a" style="left:938px;top:275px;" width="18" height="19" viewBox="0 0 18 19"><path d="M2 3c3-3 8-2 10 1 3 1 4 4 3 7-2 3-5 4-8 3-3 0-5-3-5-5 0-3 3-2 4-1" fill="#f4e019"/><path d="M5 6l3 2 4-1M7 11l3 1" stroke="#3c3f41" stroke-width="1.2" fill="none"/></svg>
<div class="t" style="left:965.5px;top:275px;color:#bbbbbb;font-size:16px;font-weight:normal;letter-spacing:0.100px;">Apache Hive</div>
<svg class="a" style="left:938px;top:301.5px;" width="18" height="19" viewBox="0 0 18 19"><path d="M6.5 1.5h4.5L4.5 15H0z" fill="#3a86d6"/><path d="M11.5 4.5L18 15H6.5l5-1.5-3-3.5z" fill="#56a6ea"/></svg>
<div class="t" style="left:965.5px;top:300px;color:#bbbbbb;font-size:16px;font-weight:normal;letter-spacing:-0.300px;">Azure SQL Database</div>
<svg class="a" style="left:938px;top:326.5px;" width="18" height="19" viewBox="0 0 18 19"><path d="M6.5 1.5h4.5L4.5 15H0z" fill="#3a86d6"/><path d="M11.5 4.5L18 15H6.5l5-1.5-3-3.5z" fill="#56a6ea"/></svg>
<div class="t" style="left:965.5px;top:325px;color:#bbbbbb;font-size:16px;font-weight:normal;letter-spacing:-0.091px;">Azure Synapse Analytics</div>
<svg class="a" style="left:938px;top:350px;" width="18" height="19" viewBox="0 0 18 19"><path d="M4.5 1h9l4.5 8-4.5 8h-9L0 9z" fill="#4a7ee6"/><circle cx="8.5" cy="8.5" r="4" fill="none" stroke="#fff" stroke-width="1.6"/><path d="M11 11l3 3" stroke="#fff" stroke-width="1.6"/></svg>
<div class="t" style="left:964.5px;top:350px;color:#bbbbbb;font-size:16px;font-weight:normal;letter-spacing:0.029px;">BigQuery</div>
<svg class="a" style="left:938px;top:375px;" width="18" height="19" viewBox="0 0 18 19"><rect x="0" y="0" width="2.4" height="18" fill="#f5d000"/><rect x="4" y="0" width="2.4" height="18" fill="#f5d000"/><rect x="8" y="0" width="2.4" height="18" fill="#f5d000"/><rect x="12" y="0" width="2.4" height="18" fill="#f5d000"/><rect x="15.5" y="7" width="2.4" height="3.5" fill="#f5d000"/><rect x="0" y="14" width="2.4" height="4" fill="#e03a2a"/></svg>
<div class="t" style="left:965.5px;top:375px;color:#bbbbbb;font-size:16px;font-weight:normal;letter-spacing:-0.100px;">ClickHouse</div>
<svg class="a" style="left:938px;top:400px;" width="18" height="19" viewBox="0 0 18 19"><path d="M3 2c2 0 4 1 5.5 3C10 3 12 2 14 2M8.5 5c-3 2-4 5-3 8 1 2 2 4 3 5 1-1 2-3 3-5 1-3 0-6-3-8zM8.5 8v8" stroke="#6b6de0" stroke-width="1.5" fill="none"/></svg>
<div class="t" style="left:965.5px;top:400px;color:#bbbbbb;font-size:16px;font-weight:normal;letter-spacing:-0.150px;">CockroachDB</div>
<svg class="a" style="left:938px;top:425px;" width="18" height="19" viewBox="0 0 18 19"><circle cx="9" cy="9" r="8.5" fill="#e3262f"/><path d="M4 8v3c0 1 1 1.5 2 1.5h6c1 0 2-.5 2-1.5V8h-2.5v2h-5V8z" fill="#fff"/></svg>
<div class="t" style="left:965.5px;top:425px;color:#bbbbbb;font-size:16px;font-weight:normal;letter-spacing:-0.164px;">Couchbase Query</div>
<svg class="a" style="left:938px;top:450px;" width="18" height="19" viewBox="0 0 18 19"><ellipse cx="8" cy="3" rx="7" ry="2.5" fill="#3f72d8"/><path d="M1 5c0 1.5 3 2.5 7 2.5s7-1 7-2.5v3c0 1.5-3 2.5-7 2.5s-7-1-7-2.5zM1 10c0 1.5 3 2.5 7 2.5v3c-4 0-7-1-7-2.5z" fill="#3f72d8"/><path d="M11 10c-1 0-1 1-1 2s-1 1-1 1 1 0 1 1 0 2 1 2M15 10c1 0 1 1 1 2s1 1 1 1-1 0-1 1 0 2-1 2" stroke="#3f72d8" stroke-width="1.3" fill="none"/></svg>
<div class="t" style="left:964.5px;top:450px;color:#bbbbbb;font-size:16px;font-weight:normal;letter-spacing:0.156px;">DocumentDB</div>
<svg class="a" style="left:938px;top:475px;" width="18" height="19" viewBox="0 0 18 19"><path d="M1 1h4l3.5 6L12 1h4l-5.5 8L16 17h-4l-3.5-6L5 17H1l5.5-8z" fill="#8ec03f"/><path d="M8.5 11L12 17h4l-5.5-8z" fill="#b8b8b8"/></svg>
<div class="t" style="left:964.5px;top:475px;color:#bbbbbb;font-size:16px;font-weight:normal;letter-spacing:-0.320px;">Exasol</div>
<svg class="a" style="left:938px;top:500px;" width="18" height="19" viewBox="0 0 18 19"><circle cx="9" cy="9" r="7.5" fill="none" stroke="#8dc63f" stroke-width="2"/><path d="M5 12c1-4 4-6 8-6-2 2-4 4-5 7" fill="#8dc63f"/></svg>
<div class="t" style="left:965.5px;top:500px;color:#bbbbbb;font-size:16px;font-weight:normal;letter-spacing:0.137px;">Greenplum</div>
<svg class="a" style="left:938px;top:525px;" width="18" height="19" viewBox="0 0 18 19"><rect x="0" y="2" width="18" height="14" fill="#1c5fe8"/><text x="10" y="14" font-family="Liberation Sans" font-size="9" font-weight="bold" fill="#fff" text-anchor="middle">H2</text></svg>
<div class="t" style="left:964.5px;top:525px;color:#bbbbbb;font-size:16px;font-weight:normal;letter-spacing:1.000px;">H2</div>
<svg class="a" style="left:938px;top:550px;" width="18" height="19" viewBox="0 0 18 19"><circle cx="9" cy="8.5" r="8" fill="#5fb4e8"/><circle cx="9" cy="8.5" r="4.5" fill="none" stroke="#c8e6f8" stroke-width="1.6"/><path d="M10 11l4 4" stroke="#c8e6f8" stroke-width="1.6"/></svg>
<div class="t" style="left:964.5px;top:550px;color:#bbbbbb;font-size:16px;font-weight:normal;letter-spacing:-1.000px;">HSQLDB</div>
<svg class="a" style="left:938px;top:575px;" width="18" height="19" viewBox="0 0 18 19"><rect x="0" y="0" width="18" height="9" fill="#111"/><rect x="0" y="9" width="18" height="9" fill="#4aa24a"/><text x="9" y="8" font-family="Liberation Mono" font-size="8.5" font-weight="bold" fill="#fff" text-anchor="middle">IBM</text><text x="9" y="17" font-family="Liberation Mono" font-size="8.5" font-weight="bold" fill="#fff" text-anchor="middle">DB2</text></svg>
<div class="t" style="left:964.5px;top:575px;color:#bbbbbb;font-size:16px;font-weight:normal;letter-spacing:-0.260px;">IBM Db2 LUW</div>
<svg class="a" style="left:938px;top:600px;" width="18" height="19" viewBox="0 0 18 19"><path d="M1 16c2-1 4-1 5-4 1-3 3-6 6-8 2-1 4-2 5-3-1 2-2 3-2 6 0 2-1 4-1 6M9 14c1-2 3-3 4-2" stroke="#d0d0d0" stroke-width="1.2" fill="none"/></svg>
<div class="t" style="left:964.5px;top:600px;color:#bbbbbb;font-size:16px;font-weight:normal;letter-spacing:-0.167px;">MariaDB</div>
<svg class="a" style="left:938px;top:626px;" width="18" height="19" viewBox="0 0 18 19"><path d="M6.5 1.2c1.2-.6 2.6 0 3 1.2L6 3.5z" fill="#d8d8d8"/><path d="M5 3.5l12 3.8-9.5 4.2z" fill="#d9623c"/><path d="M6 5l8 2.5M7 8l6-.5" stroke="#8a3a20" stroke-width=".8"/><path d="M1.5 15.5c.5-3 3.5-4.8 8.5-6 .2 3.2-.8 6.5-3 8.5-2.5.2-4.8-.8-5.5-2.5z" fill="#d2d2d2"/><path d="M4 13l1.5.8M6.5 12l1 1.2M5 16l1.6-.4" stroke="#555" stroke-width="1"/></svg>
<div class="t" style="left:964.5px;top:625px;color:#bbbbbb;font-size:16px;font-weight:normal;letter-spacing:0.126px;">Microsoft SQL Server</div>
<svg class="a" style="left:938px;top:651px;" width="18" height="19" viewBox="0 0 18 19"><path d="M6.5 1.2c1.2-.6 2.6 0 3 1.2L6 3.5z" fill="#d8d8d8"/><path d="M5 3.5l12 3.8-9.5 4.2z" fill="#d9623c"/><path d="M6 5l8 2.5M7 8l6-.5" stroke="#8a3a20" stroke-width=".8"/><path d="M1.5 15.5c.5-3 3.5-4.8 8.5-6 .2 3.2-.8 6.5-3 8.5-2.5.2-4.8-.8-5.5-2.5z" fill="#d2d2d2"/><path d="M4 13l1.5.8M6.5 12l1 1.2M5 16l1.6-.4" stroke="#555" stroke-width="1"/></svg>
<div class="t" style="left:964.5px;top:650px;color:#bbbbbb;font-size:16px;font-weight:normal;letter-spacing:0.007px;">Microsoft SQL Server LocalDB</div>
<svg class="a" style="left:938px;top:675px;" width="18" height="19" viewBox="0 0 18 19"><path d="M9 0c-3 4-4 7-4 9 0 3 2 6 4 7 2-1 4-4 4-7 0-2-1-5-4-9z" fill="#13aa52"/><path d="M9 15v3" stroke="#b8c4b8" stroke-width="1"/></svg>
<div class="t" style="left:964.5px;top:675px;color:#bbbbbb;font-size:16px;font-weight:normal;letter-spacing:0.533px;">MongoDB</div>
<svg class="a" style="left:938px;top:700px;" width="18" height="19" viewBox="0 0 18 19"><rect x="0" y="0" width="18" height="18" fill="#e00000"/><rect x="3" y="5" width="12" height="8" rx="4" fill="none" stroke="#fff" stroke-width="2"/></svg>
<div class="t" style="left:965.5px;top:700px;color:#bbbbbb;font-size:16px;font-weight:normal;letter-spacing:-0.160px;">Oracle</div>
<svg class="a" style="left:938px;top:725px;" width="18" height="19" viewBox="0 0 18 19"><path d="M2 3c0-2 4-3 7-2 3-1 7 0 7 3 0 3-1 6-3 8v5h-2v-4c-1 0-2 0-2 1v3H7v-4c-3 0-5-3-5-6z" fill="#336791"/><path d="M5 4c1-1 3-1 4 0M10 3c2 0 3 1 3 3M7 8v6M11 7v5" stroke="#8ec6ec" stroke-width="1.3" fill="none"/></svg>
<div class="t" style="left:964.5px;top:725px;color:#bbbbbb;font-size:16px;font-weight:normal;letter-spacing:-0.100px;">PostgreSQL</div>
<svg class="a" style="left:938px;top:750px;" width="18" height="19" viewBox="0 0 18 19"><path d="M1 12l8 4 8-4v2l-8 4-8-4z" fill="#a41e11"/><path d="M1 8l8 4 8-4v2.5l-8 4-8-4z" fill="#c6302b"/><path d="M1 5l8-4 8 4-8 4z" fill="#dc382d"/><circle cx="11" cy="5" r="1.2" fill="#fff"/><path d="M5 4l3 1" stroke="#fff" stroke-width="1"/></svg>
<div class="t" style="left:964.5px;top:750px;color:#bbbbbb;font-size:16px;font-weight:normal;letter-spacing:-0.150px;">Redis</div>
<svg class="a" style="left:938px;top:775px;" width="18" height="19" viewBox="0 0 18 19"><rect x="0" y="3" width="11" height="14" fill="#1f8fd6"/><path d="M16 0c-3 1-6 5-7 10l-1 7c1-3 3-6 5-8 2-3 4-6 3-9z" fill="#eaeaea"/><path d="M10 13l3-7" stroke="#1f8fd6" stroke-width="1"/></svg>
<div class="t" style="left:964.5px;top:775px;color:#bbbbbb;font-size:16px;font-weight:normal;letter-spacing:-0.220px;">SQLite</div>
<svg class="a" style="left:938px;top:801px;" width="18" height="19" viewBox="0 0 18 19"><path d="M9.00 7.00 L11.68 4.09 L9.00 0.10 L6.32 4.09Z M10.41 7.59 L14.37 7.42 L15.29 2.71 L10.58 3.63Z M11.00 9.00 L13.91 11.68 L17.90 9.00 L13.91 6.32Z M10.41 10.41 L10.58 14.37 L15.29 15.29 L14.37 10.58Z M9.00 11.00 L6.32 13.91 L9.00 17.90 L11.68 13.91Z M7.59 10.41 L3.63 10.58 L2.71 15.29 L7.42 14.37Z M7.00 9.00 L4.09 6.32 L0.10 9.00 L4.09 11.68Z M7.59 7.59 L7.42 3.63 L2.71 2.71 L3.63 7.42Z" fill="#3fb3dc" stroke="#2a3a44" stroke-width="0.6"/><rect x="7.8" y="7.8" width="2.4" height="2.4" fill="#3fb3dc"/></svg>
<div class="t" style="left:964.5px;top:800px;color:#bbbbbb;font-size:16px;font-weight:normal;letter-spacing:0.025px;">Snowflake</div>
<svg class="a" style="left:938px;top:826px;" width="18" height="19" viewBox="0 0 18 19"><rect x="0" y="0" width="18" height="18" fill="#3d4fe6"/><path d="M3 17C1.5 12 3 5 8.5 3.2c4.5-1.3 8 1.2 8 4.8 0 2.6-2.2 3.8-3.6 3-1.2-.6-.8-2.4.6-2.2" fill="none" stroke="#e8ecff" stroke-width="1.4"/></svg>
<div class="t" style="left:964.5px;top:825px;color:#bbbbbb;font-size:16px;font-weight:normal;letter-spacing:-0.611px;">Sybase ASE</div>
<svg class="a" style="left:938px;top:851px;" width="18" height="19" viewBox="0 0 18 19"><rect x="0" y="0" width="18" height="18" fill="#3a92c8"/><path d="M4 3.2l5 11.5 5-11.5" fill="none" stroke="#fff" stroke-width="1.8"/></svg>
<div class="t" style="left:965.5px;top:850px;color:#bbbbbb;font-size:16px;font-weight:normal;letter-spacing:0.283px;">Vertica</div>
<div class="a" style="left:928px;top:875px;width:282px;height:1px;background:#5a5d5f;"></div>
<div class="t" style="left:965.5px;top:881px;color:#bbbbbb;font-size:16px;font-weight:normal;letter-spacing:0.325px;">Other</div>
<svg class="a" style="left:1190px;top:884px;" width="8" height="12" viewBox="0 0 8 12"><path d="M1.5 1l5 5-5 5" fill="none" stroke="#afb1b3" stroke-width="1.5"/></svg>
<div class="a" style="left:1221px;top:78px;width:299px;height:256px;background:#3c3f41;border:1px solid #5e6060"></div>
<svg class="a" style="left:1238px;top:88px;" width="19" height="17" viewBox="0 0 19 17"><rect x="1" y="1" width="17" height="15" fill="none" stroke="#afb1b3" stroke-width="1.8"/><path d="M1 4h17" stroke="#afb1b3" stroke-width="2"/><path d="M4 8l3 2-3 2M8 12h4" stroke="#afb1b3" stroke-width="1.3" fill="none"/></svg>
<div class="t" style="left:1265.7px;top:87px;color:#bbbbbb;font-size:16px;font-weight:normal;letter-spacing:0.017px;">Query Console</div>
<div class="t" style="left:1402px;top:87px;color:#bbbbbb;font-size:16px;font-weight:normal;letter-spacing:0.445px;">Ctrl+Shift+Q</div>
<div class="a" style="left:1226px;top:112px;width:290px;height:1px;background:#5a5d5f;"></div>
<div class="a" style="left:1222px;top:115px;width:297px;height:25px;background:#4b6eaf;"></div>
<svg class="a" style="left:1238px;top:119px;" width="19" height="18" viewBox="0 0 19 18"><ellipse cx="9.5" cy="3" rx="8.5" ry="2.6" fill="#40b6e0"/><path d="M1 5.5c0 1.5 3.8 2.6 8.5 2.6S18 7 18 5.5v2.5c0 1.5-3.8 2.6-8.5 2.6S1 9.5 1 8zM1 10.5c0 1.5 3.8 2.6 8.5 2.6S18 12 18 10.5v2.5c0 1.5-3.8 2.6-8.5 2.6S1 14.5 1 13z" fill="#40b6e0"/></svg>
<div class="t" style="left:1264.7px;top:118px;color:#e4e8ee;font-size:16px;font-weight:normal;letter-spacing:-0.140px;">Data Source</div>
<svg class="a" style="left:1494px;top:121px;" width="8" height="12" viewBox="0 0 8 12"><path d="M1.5 1l5 5-5 5" fill="none" stroke="#fff" stroke-width="1.6"/></svg>
<svg class="a" style="left:1238px;top:144px;" width="19" height="17" viewBox="0 0 19 17"><rect x="1" y="1" width="17" height="15" fill="none" stroke="#afb1b3" stroke-width="1.8"/><rect x="0" y="8" width="19" height="8" fill="#d4a520"/><text x="9.5" y="15" font-family="Liberation Sans" font-size="7" font-weight="bold" fill="#3c3f41" text-anchor="middle">DDL</text></svg>
<div class="t" style="left:1264.7px;top:143px;color:#bbbbbb;font-size:16px;font-weight:normal;letter-spacing:-0.193px;">DDL Data Source</div>
<svg class="a" style="left:1238px;top:169px;" width="19" height="17" viewBox="0 0 19 17"><path d="M5 2h5v13H5c-2 0-4-3-4-6.5S3 2 5 2z" fill="#9aa0a4"/><rect x="11" y="3" width="3" height="2.5" fill="#9aa0a4"/><rect x="11" y="11" width="3" height="2.5" fill="#9aa0a4"/><rect x="15" y="3" width="3" height="2.5" fill="#9aa0a4"/><rect x="15" y="11" width="3" height="2.5" fill="#9aa0a4"/></svg>
<div class="t" style="left:1264.7px;top:168px;color:#bbbbbb;font-size:16px;font-weight:normal;letter-spacing:-0.111px;">Data Source from URL</div>
<svg class="a" style="left:1238px;top:194px;" width="19" height="17" viewBox="0 0 19 17"><path d="M1 2h6l2 2h7v3H4l-3 9z" fill="#9aa0a4"/><path d="M4 8h15l-3 8H1z" fill="#9aa0a4"/></svg>
<div class="t" style="left:1264.7px;top:193px;color:#bbbbbb;font-size:16px;font-weight:normal;letter-spacing:0.045px;">Data Source from Path</div>
<svg class="a" style="left:1239px;top:219px;" width="17" height="18" viewBox="0 0 17 18"><rect x="2" y="3" width="12" height="14" fill="none" stroke="#afb1b3" stroke-width="2"/><rect x="5" y="1" width="6" height="4" fill="#afb1b3"/></svg>
<div class="t" style="left:1264.7px;top:218px;color:#bbbbbb;font-size:16px;font-weight:normal;letter-spacing:0.545px;">Import from Clipboard</div>
<div class="a" style="left:1226px;top:244px;width:290px;height:1px;background:#5a5d5f;"></div>
<svg class="a" style="left:1238px;top:250px;" width="18" height="18" viewBox="0 0 18 18"><rect x="1.6" y="1.6" width="14.8" height="14.8" rx="1.5" fill="none" stroke="#a0a4a8" stroke-width="3.1"/><path d="M16.4 1.6V16.4H1.6" stroke="#40b6e0" stroke-width="3.1" fill="none"/><rect x="0.3" y="0.3" width="17.4" height="17.4" rx="2" fill="none" stroke="#3c3f41" stroke-width="1" stroke-dasharray="1.6 2.4"/></svg>
<div class="t" style="left:1264.7px;top:249px;color:#bbbbbb;font-size:16px;font-weight:normal;letter-spacing:-0.005px;">Driver and Data Source</div>
<svg class="a" style="left:1238px;top:275px;" width="18" height="18" viewBox="0 0 18 18"><rect x="1.6" y="1.6" width="14.8" height="14.8" rx="1.5" fill="none" stroke="#a0a4a8" stroke-width="3.1"/><path d="M16.4 1.6V16.4H1.6" stroke="#40b6e0" stroke-width="3.1" fill="none"/><rect x="0.3" y="0.3" width="17.4" height="17.4" rx="2" fill="none" stroke="#3c3f41" stroke-width="1" stroke-dasharray="1.6 2.4"/></svg>
<div class="t" style="left:1264.7px;top:274px;color:#bbbbbb;font-size:16px;font-weight:normal;letter-spacing:0.040px;">Driver</div>
<div class="a" style="left:1226px;top:300px;width:290px;height:1px;background:#5a5d5f;"></div>
<svg class="a" style="left:1239px;top:308px;" width="17" height="17" viewBox="0 0 17 17"><path d="M1.5 3v11.5H13.5" stroke="#afb1b3" stroke-width="2.8" fill="none"/><path d="M15.5 1.5L8 9" stroke="#afb1b3" stroke-width="2.8"/><path d="M5 5.5v7h7z" fill="#afb1b3"/></svg>
<div class="t" style="left:1264.7px;top:306px;color:#bbbbbb;font-size:16px;font-weight:normal;letter-spacing:0.100px;">Import Data Sources...</div>
<div class="a" style="left:914px;top:114px;width:288px;height:64px;background:transparent;border:5px solid #fe2219;border-radius:4px"></div>
<div class="a" style="left:1213px;top:97px;width:304px;height:55px;background:transparent;border:5px solid #fe2219;border-radius:4px"></div>
</body></html>
